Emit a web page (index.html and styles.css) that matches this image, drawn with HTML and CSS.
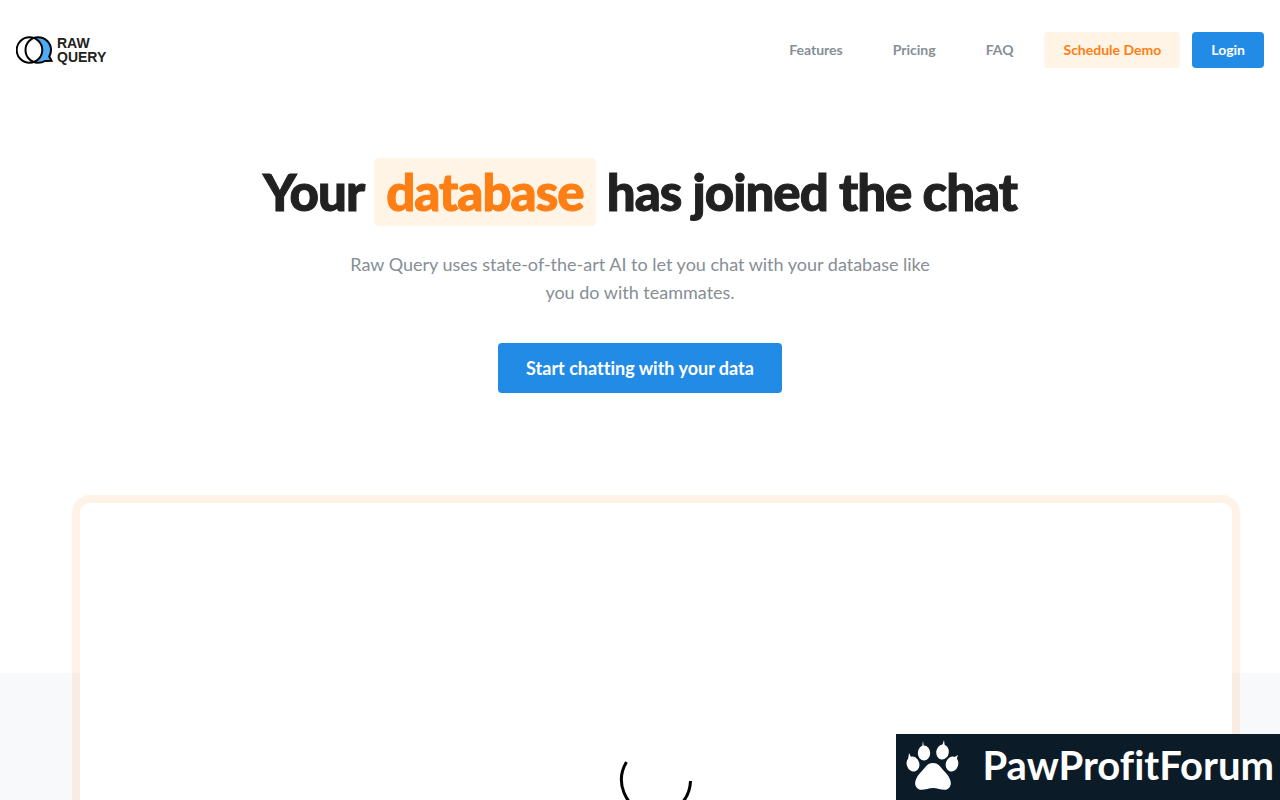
FILE: index.html
```html
<!DOCTYPE html>
<html lang="en">
<head>
<meta charset="utf-8">
<meta name="viewport" content="width=device-width, initial-scale=1">
<title>Raw Query</title>
<link rel="stylesheet" href="styles.css">
</head>
<body>
<header class="header">
  <a class="brand" href="#">
    <svg class="brand-mark" viewBox="0 0 38 30" aria-hidden="true">
      <path d="M23 2A13 13 0 0 1 34 21L36 26L29 26A13 13 0 0 1 19 27A13 13 0 0 0 19 3Z" fill="#4dabf7"/>
      <circle cx="13.500" cy="15" r="12.8" fill="#fff"/>
      <path d="M22 2.200C29.500 2.200 35 7.900 35 15C35 17.500 34.300 19.700 33.200 21.500L35.500 25.800L29 26C27 27.200 25 27.800 22 27.800C15 27.800 9.500 22 9.500 15S15 2.200 22 2.200Z" fill="none" stroke="#000" stroke-width="2"/>
      <circle cx="13.500" cy="15" r="12.800" fill="none" stroke="#000" stroke-width="2"/>
    </svg>
    <span class="brand-name">RAW<br>QUERY</span>
  </a>
  <nav class="nav">
    <a class="nav-link" href="#features">Features</a>
    <a class="nav-link" href="#pricing">Pricing</a>
    <a class="nav-link" href="#faq">FAQ</a>
    <div class="actions">
      <button class="button button-light" type="button">Schedule Demo</button>
      <button class="button" type="button">Login</button>
    </div>
  </nav>
</header>
<main>
  <section class="hero">
    <h1 class="title">Your <span class="highlight">database</span> has joined the chat</h1>
    <p class="lead">Raw Query uses state-of-the-art AI to let you chat with your database like you do with teammates.</p>
    <button class="button button-large" type="button">Start chatting with your data</button>
  </section>
  <section class="demo">
    <div class="frame">
      <svg class="spinner" viewBox="0 0 80 80" role="img" aria-label="Loading">
        <path d="M10.500 23A34.500 34.500 0 1 0 74.500 42" fill="none" stroke="#000" stroke-width="3"/>
      </svg>
    </div>
  </section>
</main>
<aside class="badge">
  <svg class="paw" viewBox="0 0 54 54" aria-hidden="true">
    <g fill="#fff">
      <ellipse cx="7" cy="26" rx="6.300" ry="7.500" transform="rotate(-18 7 26)"/>
      <ellipse cx="18" cy="15" rx="6.200" ry="7.500"/>
      <ellipse cx="36.500" cy="14" rx="6.300" ry="7.500" transform="rotate(8 36.500 14)"/>
      <ellipse cx="46" cy="26" rx="6.200" ry="7.500" transform="rotate(18 46 26)"/>
      <path d="M16 10L17 3L18 10ZM36 8L38 2L39 10ZM2 22L3 15L6 21ZM47 20L52 17L50 23Z"/>
      <path d="M27 25C33 25 35 30 39 34C44 39 47 46 43 50C39 54 33 50 27 50S15 54 11 50C7 46 10 39 15 34C19 30 21 25 27 25Z"/>
    </g>
  </svg>
  <span class="badge-text">PawProfitForum</span>
</aside>
</body>
</html>
```
FILE: styles.css
```css
* {
  box-sizing: border-box;
}

body {
  margin: 0;
  height: 100vh;
  overflow: hidden;
  background: #fff;
  color: #212529;
  font-family: Lato, sans-serif;
  font-variant-ligatures: none;
}

.header {
  display: flex;
  align-items: center;
  justify-content: space-between;
  height: 100px;
  padding: 0 16px;
}

.brand {
  display: flex;
  align-items: center;
  gap: 3px;
  color: #212121;
  text-decoration: none;
}

.brand-mark {
  width: 38px;
  height: 30px;
}

.brand-name {
  font: bold 14px/14px "Liberation Sans", Arial, sans-serif;
}

.nav {
  display: flex;
  align-items: center;
  gap: 50px;
}

.nav-link {
  padding-bottom: 2px;
  color: #868e96;
  font-size: 14px;
  font-weight: 700;
  text-decoration: none;
}

.actions {
  display: flex;
  gap: 12px;
  margin-left: -19px;
}

.button {
  height: 36px;
  padding: 0 18px 2px;
  border: 1px solid transparent;
  border-radius: 4px;
  background: #228be6;
  color: #fff;
  font-family: Lato, sans-serif;
  font-size: 14px;
  font-weight: 700;
  font-variant-ligatures: none;
}

.button-light {
  background: #fff4e6;
  color: #fd7e14;
}

.button-large {
  height: 50px;
  padding: 0 27px;
  font-size: 18px;
}

.hero {
  display: flex;
  flex-direction: column;
  align-items: center;
  padding: 57px 16px 102px;
  text-align: center;
}

.title {
  margin: 0;
  color: #212121;
  font-size: 51px;
  font-weight: 900;
  line-height: 70px;
  letter-spacing: -1px;
  -webkit-text-stroke: 1px currentColor;
}

.highlight {
  padding: 3px 12px 4px;
  border-radius: 4px;
  background: #fff4e6;
  color: #fd7e14;
}

.lead {
  max-width: 600px;
  margin: 23px 0 37px;
  color: #868e96;
  font-size: 18px;
  line-height: 28px;
}

.demo {
  padding: 0 40px 80px 72px;
  background: linear-gradient(#fff 178px, #f8f9fb 178px);
}

.frame {
  display: flex;
  align-items: center;
  justify-content: center;
  height: 568px;
  border: 8px solid rgba(253, 126, 20, 0.1);
  border-radius: 18px;
  background: #fff padding-box;
}

.spinner {
  width: 80px;
  height: 80px;
}

.badge {
  position: fixed;
  right: 0;
  bottom: 0;
  display: flex;
  align-items: center;
  gap: 22px;
  height: 66px;
  padding: 0 6px 4px 10px;
  background: #0b1c28;
  color: #fff;
}

.paw {
  width: 54px;
  height: 54px;
}

.badge-text {
  font-size: 40px;
  font-weight: 700;
}
```
